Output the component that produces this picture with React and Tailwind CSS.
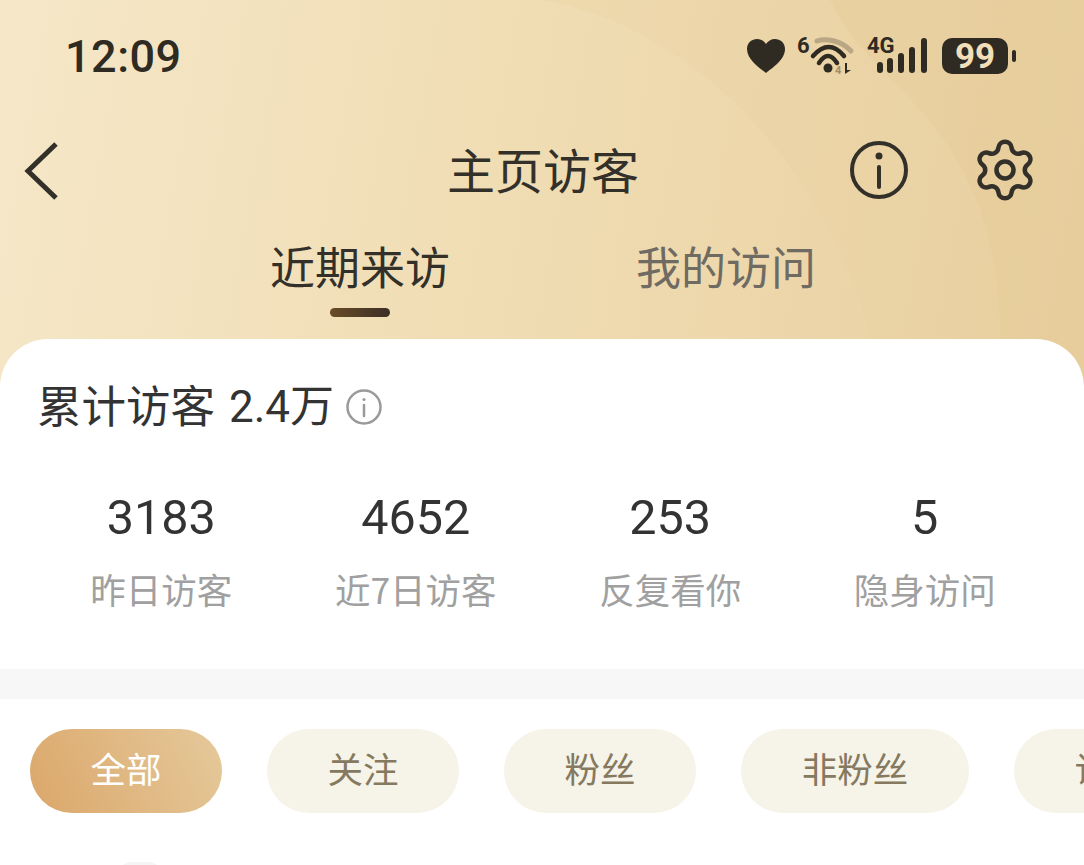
import React from 'react';
import { Settings } from 'lucide-react';

const cjk = { fontFamily: '"Noto Sans CJK SC", "Noto Sans", sans-serif' };

const stats = [
  { value: '3183', label: '昨日访客' },
  { value: '4652', label: '近7日访客' },
  { value: '253', label: '反复看你' },
  { value: '5', label: '隐身访问' },
];

const filters = [
  { label: '全部', width: 'w-[192px]', active: true },
  { label: '关注', width: 'w-[192px]' },
  { label: '粉丝', width: 'w-[192px]' },
  { label: '非粉丝', width: 'w-[228px]' },
  { label: '访客', width: 'w-[192px]' },
];

function StatusIcons() {
  return (
    <div className="flex items-center">
      {/* heart */}
      <svg width="40" height="36" viewBox="0 0 40 36" className="mr-[11px]">
        <path d="M20 35C14 30 1 22 1 11 1 4.500 6 1 11 1c4 0 7 2 9 5 2-3 5-5 9-5 5 0 10 3.500 10 10 0 11-13 19-19 24z" fill="#2f2a22" />
      </svg>
      {/* wifi */}
      <svg width="58" height="48" viewBox="0 -4 58 48" className="mr-[12px]">
        <text x="0" y="17" fontSize="22" fontWeight="700" fill="#2f2a22" fontFamily="Roboto, sans-serif">6</text>
        <path d="M20 5C28 2 44 4 54 15" fill="none" stroke="#b9a684" strokeWidth="5" strokeLinecap="round" />
        <path d="M16 20Q32 2 47 20" fill="none" stroke="#2f2a22" strokeWidth="4.500" strokeLinecap="round" />
        <path d="M22 27Q31 13 40 27" fill="none" stroke="#2f2a22" strokeWidth="4.500" strokeLinecap="round" />
        <circle cx="31" cy="32" r="4.500" fill="#2f2a22" />
        <text x="38" y="38" fontSize="11" fontWeight="700" fill="#a08d6a" fontFamily="Roboto, sans-serif">4</text>
        <path d="M48 27v11l6-4h-4v-7z" fill="#2f2a22" />
      </svg>
      {/* cellular */}
      <svg width="62" height="48" viewBox="0 -4 62 48" className="mr-[13px]">
        <text x="0" y="17" fontSize="22" fontWeight="700" fill="#2f2a22" fontFamily="Roboto, sans-serif">4G</text>
        <rect x="10" y="26" width="6" height="11" rx="3" fill="#2f2a22" />
        <rect x="20" y="22" width="6" height="15" rx="3" fill="#2f2a22" />
        <rect x="31" y="17" width="6" height="20" rx="3" fill="#2f2a22" />
        <rect x="42" y="11" width="6" height="26" rx="3" fill="#2f2a22" />
        <rect x="54" y="2" width="6" height="35" rx="3" fill="#2f2a22" />
      </svg>
      {/* battery */}
      <div className="flex items-center gap-[4px]">
        <div className="w-[66px] h-[36px] rounded-[10px] bg-[#2f2a22] flex items-center justify-center text-[#f2dfb8] text-[35px] font-bold leading-none" style={{ fontFamily: 'Roboto, sans-serif' }}>
          99
        </div>
        <div className="w-[4px] h-[12px] rounded-full bg-[#2f2a22]" />
      </div>
    </div>
  );
}

function SmallInfo() {
  return (
    <svg width="36" height="36" viewBox="0 0 36 36" fill="none" stroke="#9a9a9a" strokeWidth="2.500" strokeLinecap="round">
      <circle cx="18" cy="18" r="16.500" />
      <path d="M18 16v11" />
      <circle cx="18" cy="10.500" r="1.500" fill="#9a9a9a" stroke="none" />
    </svg>
  );
}

function App() {
  return (
    <div className="relative w-[1084px] h-[865px] overflow-hidden bg-white" style={cjk}>
      {/* header backdrop */}
      <div className="absolute inset-x-0 top-0 h-[400px] bg-[linear-gradient(100deg,#f5e7c8_0%,#f0dcb2_50%,#e8cf9f_100%)]">
        <svg width="1084" height="400" viewBox="0 0 1084 400" className="absolute inset-0">
          <path d="M830 0C870 90 1000 120 1000 340V400H1084V0z" fill="#e3c793" opacity="0.3" />
          <path d="M540 0C680 20 830 160 872 345V400H1084V0z" fill="#e8cf9e" opacity="0.25" />
        </svg>
      </div>

      <div className="relative">
        {/* status bar */}
        <div className="h-[112px] flex items-center justify-between pl-[65px] pr-[68px]">
          <span className="text-[45px] font-medium text-[#2f2a22] leading-none tracking-[0.5px]" style={{ fontFamily: 'Roboto, sans-serif' }}>12:09</span>
          <StatusIcons />
        </div>

        {/* nav */}
        <div className="relative h-[116px] flex items-center justify-center">
          <svg width="36" height="60" viewBox="0 0 36 60" fill="none" stroke="#33302a" strokeWidth="5" className="absolute left-[23px] top-[29px]">
            <path d="M33 3L5 30l28 27" />
          </svg>
          <span className="text-[48px] leading-none text-[#33302a] -translate-y-[2.500px] translate-x-[1px]">主页访客</span>
          <div className="absolute right-[45px] inset-y-0 flex items-center gap-[62px]">
            <svg width="60" height="60" viewBox="0 0 60 60" fill="none" stroke="#33302a" strokeWidth="4" strokeLinecap="round">
              <circle cx="30" cy="30" r="27" />
              <path d="M30 27v20" />
              <circle cx="30" cy="16" r="3.500" fill="#33302a" stroke="none" />
            </svg>
            <Settings size={68} strokeWidth={1.6} color="#33302a" />
          </div>
        </div>

        {/* tabs */}
        <div className="h-[111px] flex gap-[186px] pl-[270px] pt-[14px]">
          <div className="flex flex-col items-center">
            <span className="text-[45px] leading-[48px] text-[#33302a]">近期来访</span>
            <div className="mt-[18px] w-[60px] h-[9px] rounded-full bg-[linear-gradient(90deg,#6a4c28,#3b2f25)]" />
          </div>
          <span className="text-[45px] leading-[48px] text-[#6f6a62]">我的访问</span>
        </div>

        {/* visitors card */}
        <div className="bg-white rounded-t-[48px]">
          <div className="h-[330px] pl-[34px] pr-[32px]">
            <div className="flex items-center pt-[44px] pl-[4px]">
              <span className="text-[44.500px] leading-[48px] text-[#333333] -translate-y-[3px] -translate-x-[1px]">累计访客</span>
              <span className="ml-[13px] text-[44px] leading-[48px] text-[#333333]" style={{ fontFamily: 'Roboto, "Noto Sans CJK SC", sans-serif' }}>2.4万</span>
              <span className="ml-[12px] flex"><SmallInfo /></span>
            </div>
            <div className="grid grid-cols-4 mt-[60px]">
              {stats.map((stat) => (
                <div key={stat.label} className="flex flex-col items-center">
                  <span className="text-[48.500px] leading-[54px] text-[#333333]" style={{ fontFamily: 'Roboto, sans-serif' }}>{stat.value}</span>
                  <span className="mt-[22px] text-[35.500px] leading-[44px] text-[#a0a0a0] whitespace-nowrap">{stat.label}</span>
                </div>
              ))}
            </div>
          </div>

          <div className="h-[30px] bg-[#f7f7f7]" />

          {/* filter pills */}
          <div className="flex gap-[45px] pt-[30px] pl-[30px]">
            {filters.map((filter) => (
              <div
                key={filter.label}
                className={`${filter.width} h-[84px] pb-[7px] shrink-0 rounded-full flex items-center justify-center text-[35.500px] leading-none ${filter.active ? 'bg-[linear-gradient(65deg,#dba76a_0%,#e5c99b_100%)] text-white' : 'bg-[#f6f3e8] text-[#85795f]'}`}
              >
                {filter.label}
              </div>
            ))}
          </div>

          {/* top edge of the next row's avatar */}
          <div className="mt-[49px] ml-[120px] w-[40px] h-[10px] rounded-t-full bg-[#f5f5f5]" />
        </div>
      </div>
    </div>
  );
}

export default App;
